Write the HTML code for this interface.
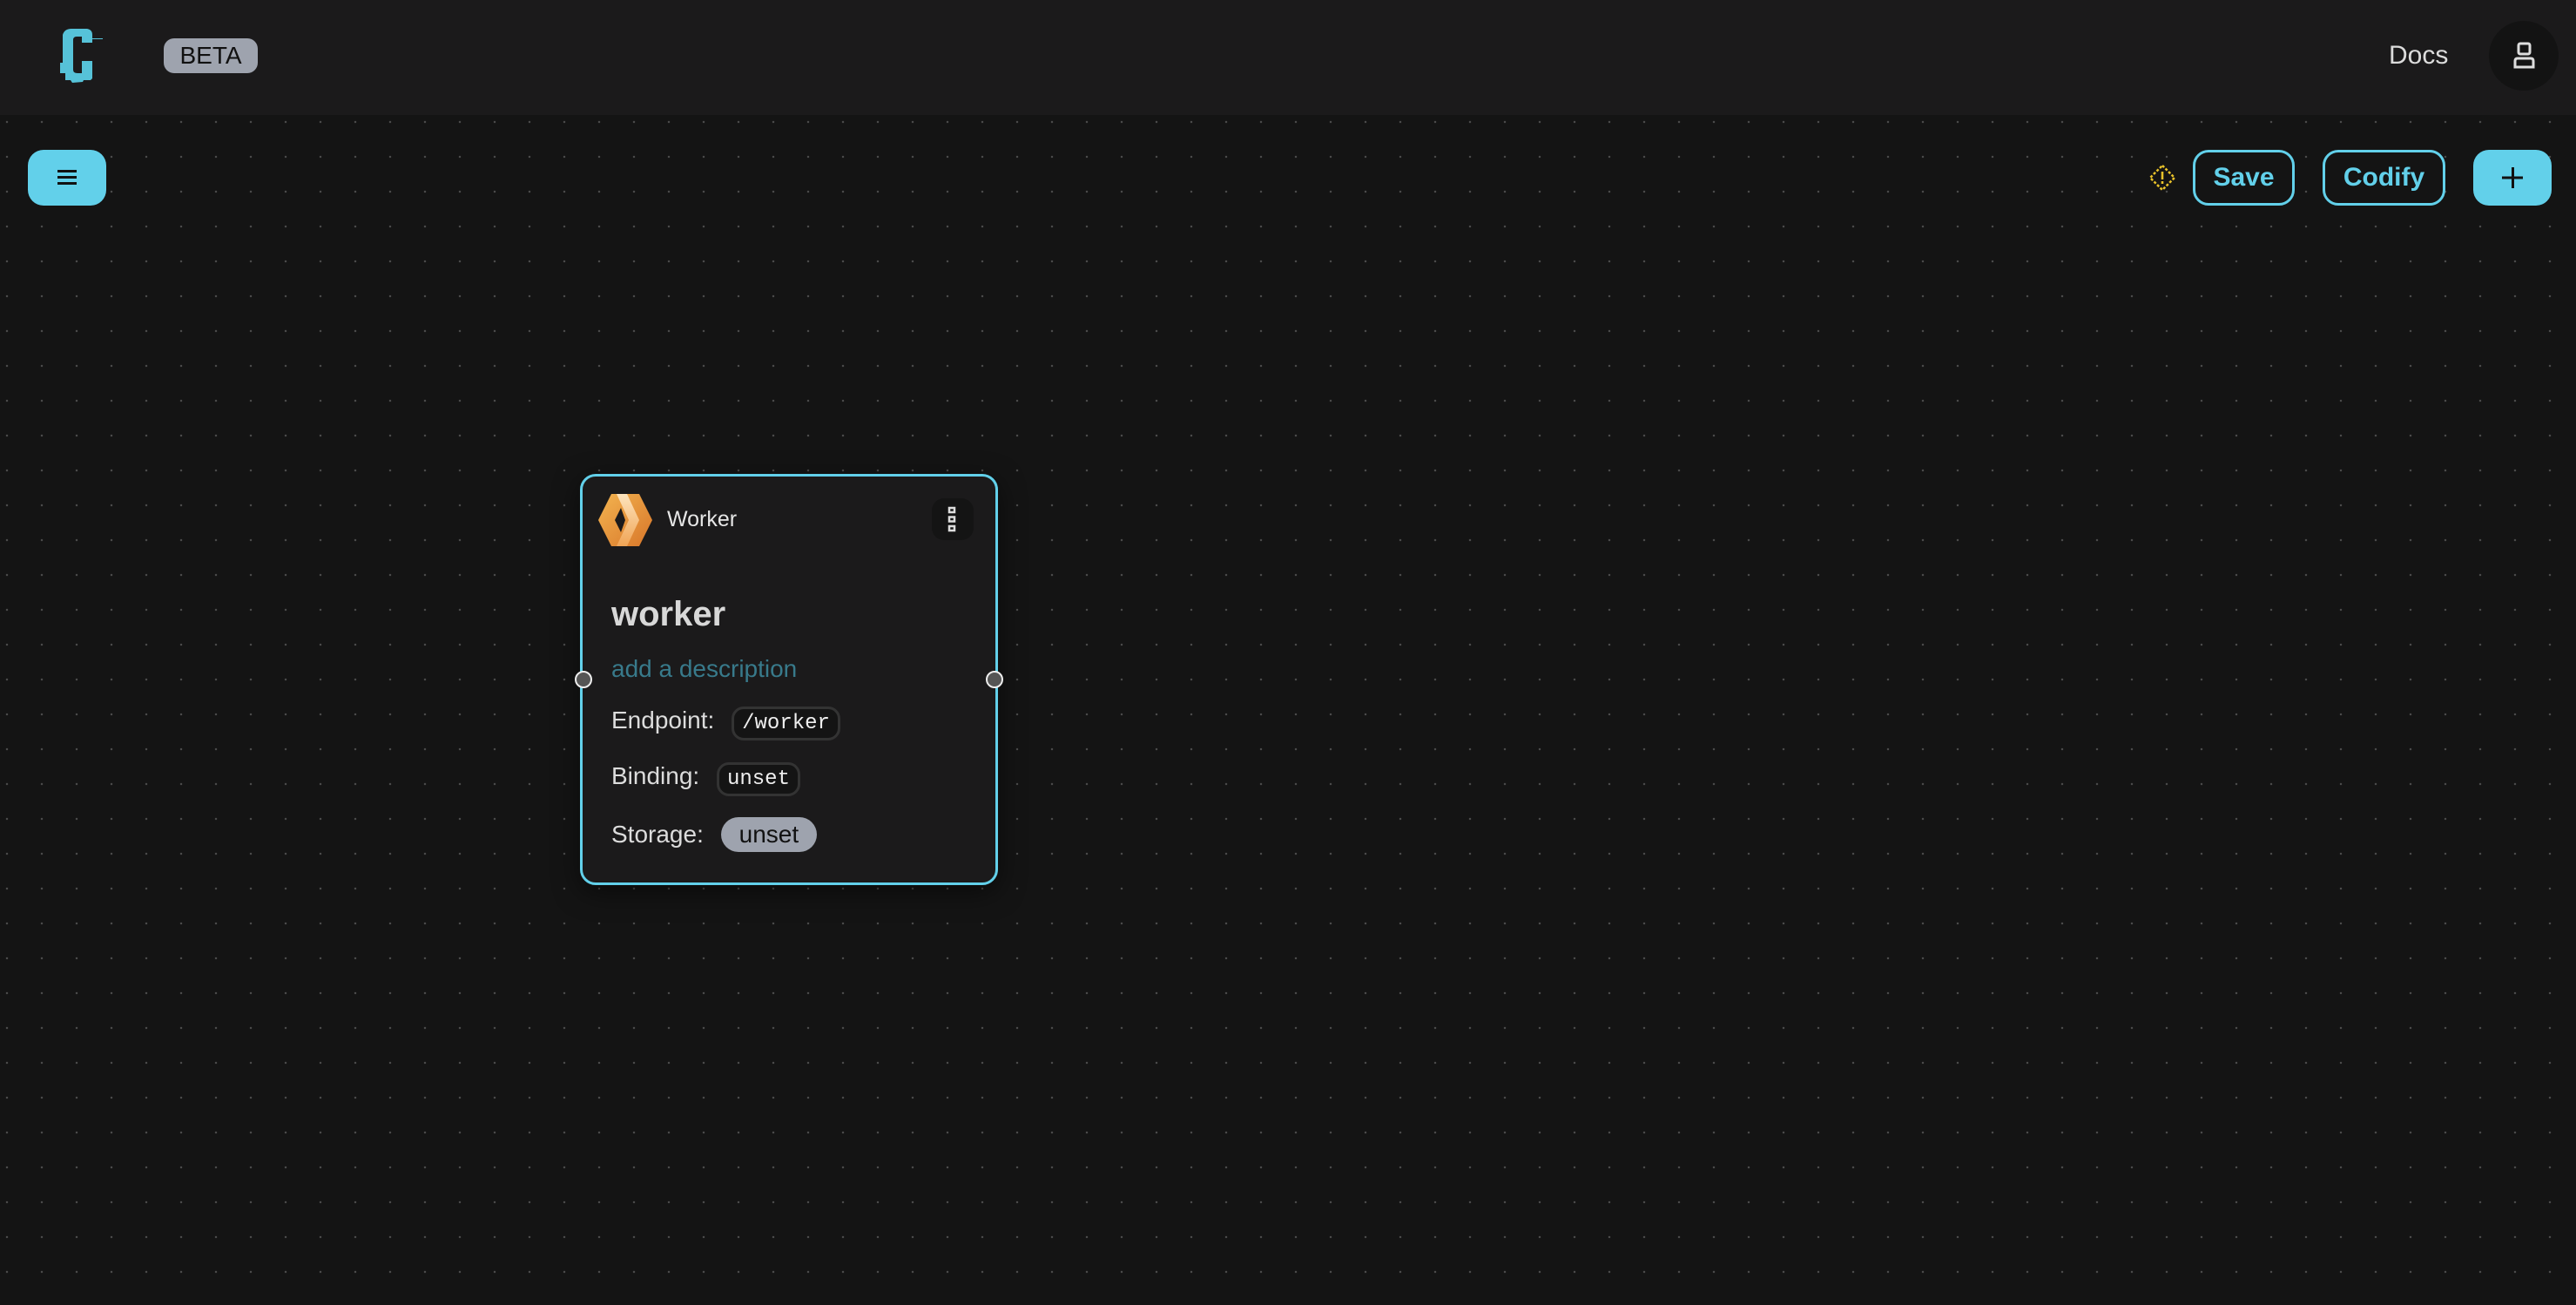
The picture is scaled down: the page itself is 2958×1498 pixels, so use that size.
<!DOCTYPE html>
<html><head><meta charset="utf-8"><style>
*{margin:0;padding:0;box-sizing:border-box}
body{width:2958px;height:1498px;overflow:hidden;background:#141414;font-family:"Liberation Sans",sans-serif;position:relative}
.hdr{position:absolute;left:0;top:0;width:2958px;height:132px;background:#1b1a1b}
.canvas{position:absolute;left:0;top:132px;width:2958px;height:1366px;background-color:#141414;background-image:radial-gradient(circle,#4a4a4a 1.1px,transparent 1.4px);background-size:40px 40px;background-position:-12px -12px}
.abs{position:absolute}
.btn{position:absolute;top:172px;height:64px;border-radius:18px}
.ob{border:3px solid #62d0ea;background:#141414;color:#62d0ea;font-weight:bold;font-size:30px;display:flex;align-items:center;justify-content:center}
.lbl{position:absolute;left:702px;font-size:28px;color:#dcdcdc}
.code{display:inline-block;font-family:"Liberation Mono",monospace;font-size:24px;color:#eee;border:3px solid #333;border-radius:14px;padding:3px 9px;background:#141414}
</style></head><body>
<div class="hdr"></div>
<svg class="abs" style="left:62px;top:30px" width="56" height="70" viewBox="0 0 56 70">
<path fill="#56c2d8" d="M10 10 Q12 3 20 3 L38 3 Q44 4 44 10 L44 14 L56 14 L56 15 L44 15 L44 19 L32 19 L32 12 L26 12 Q22 12 22 16 L22 50 Q22 54 27 54 L32 54 L32 40 L44 40 L44 60 L42 62 L34 62 L33 64 L21 65 L19 62 L13 62 L13 54 L7 54 L7 42 L10 42 Z"/>
</svg>
<div class="abs" style="left:188px;top:44px;width:108px;height:40px;background:#9ea3ae;border-radius:12px;color:#111;font-size:28px;display:flex;align-items:center;justify-content:center">BETA</div>
<div class="abs" style="left:2743px;top:47px;font-size:30px;color:#dcdcdc">Docs</div>
<div class="abs" style="left:2858px;top:24px;width:80px;height:80px;border-radius:50%;background:#131313"></div>
<svg class="abs" style="left:2886px;top:48px" width="26" height="32" viewBox="0 0 26 32"><rect x="6" y="2" width="13" height="12" rx="2" fill="none" stroke="#ddd" stroke-width="3"/><path d="M2 29 L2 22 Q2 19 5 19 L20 19 Q23 19 23 22 L23 29 Z" fill="none" stroke="#ddd" stroke-width="3"/></svg>
<div class="canvas"></div>
<div class="btn" style="left:32px;width:90px;background:#62d0ea"></div>
<svg class="abs" style="left:65px;top:194px" width="24" height="20"><rect x="1" y="1" width="22" height="3" fill="#111"/><rect x="1" y="8" width="22" height="3" fill="#111"/><rect x="1" y="15" width="22" height="3" fill="#111"/></svg>
<svg class="abs" style="left:2467px;top:188px" width="32" height="32" viewBox="0 0 32 32"><path d="M16 2 L30 16 L16 30 L2 16 Z" fill="none" stroke="#e8c22a" stroke-width="2.5" stroke-dasharray="3 2"/><rect x="14.7" y="9" width="2.6" height="9" fill="#e8c22a"/><rect x="14.7" y="20" width="2.6" height="3" fill="#e8c22a"/></svg>
<div class="btn ob" style="left:2518px;width:117px">Save</div>
<div class="btn ob" style="left:2667px;width:141px">Codify</div>
<div class="btn" style="left:2840px;width:90px;background:#62d0ea"></div>
<svg class="abs" style="left:2873px;top:192px" width="24" height="24"><rect x="11" y="0" width="3" height="24" fill="#111"/><rect x="0" y="10.5" width="24" height="3" fill="#111"/></svg>

<div class="abs" style="left:666px;top:544px;width:480px;height:472px;border:3px solid #62d0ea;border-radius:18px;background:#1b1a1b;box-shadow:0 8px 30px rgba(0,0,0,.5)"></div>
<svg class="abs" style="left:686px;top:566px" width="64" height="62" viewBox="0 0 64 62">
<defs><linearGradient id="g" x1="0" y1="0" x2="1" y2="1"><stop offset="0" stop-color="#f3b450"/><stop offset="1" stop-color="#d8762a"/></linearGradient><linearGradient id="g2" x1="0" y1="0" x2="0" y2="1"><stop offset="0" stop-color="#fde4bd"/><stop offset="1" stop-color="#f0a455"/></linearGradient></defs>
<path d="M16 1 L48 1 L63 31 L48 61 L16 61 L1 31 Z" fill="url(#g)"/>
<path d="M22 1 L34 1 L48 31 L34 61 L22 61 L36 31 Z" fill="url(#g2)"/>
<path d="M20 31 L27 17 L32 31 L27 45 Z" fill="#1b1a1b"/>
</svg>
<div class="abs" style="left:766px;top:582px;font-size:25px;color:#e6e6e6">Worker</div>
<div class="abs" style="left:1070px;top:572px;width:48px;height:48px;border-radius:14px;background:#141414"></div>
<svg class="abs" style="left:1087px;top:581px" width="14" height="30"><g fill="none" stroke="#ddd" stroke-width="2.5"><rect x="3" y="2" width="6" height="5"/><rect x="3" y="12.5" width="6" height="5"/><rect x="3" y="23" width="6" height="5"/></g></svg>
<div class="abs" style="left:702px;top:683px;font-size:40px;font-weight:bold;color:#d8d8d8">worker</div>
<div class="abs" style="left:702px;top:752px;font-size:28px;color:#387a8b">add a description</div>
<div class="lbl" style="top:811px">Endpoint: <span class="code" style="margin-left:12px">/worker</span></div>
<div class="lbl" style="top:875px">Binding: <span class="code" style="margin-left:12px">unset</span></div>
<div class="lbl" style="top:938px">Storage: <span style="display:inline-block;margin-left:12px;background:#9ea3ae;color:#111;border-radius:20px;padding:4px 21px;font-size:28px">unset</span></div>
<div class="abs" style="left:660px;top:770px;width:20px;height:20px;border-radius:50%;background:#555;border:2.5px solid #eee"></div>
<div class="abs" style="left:1132px;top:770px;width:20px;height:20px;border-radius:50%;background:#555;border:2.5px solid #eee"></div>
</body></html>
